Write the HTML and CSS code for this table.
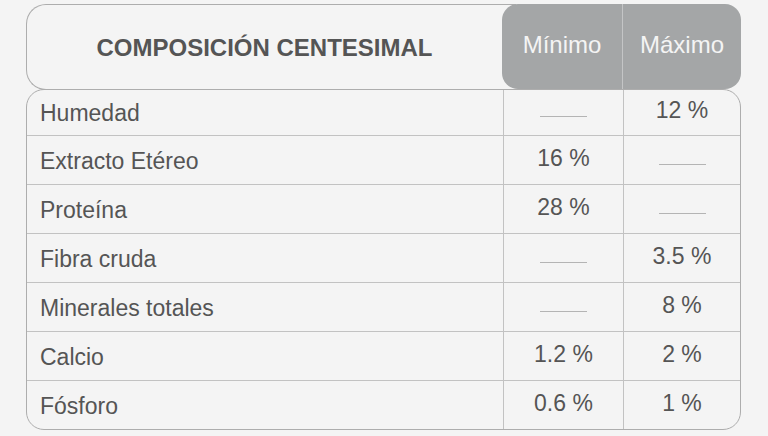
FILE: index.html
```html
<!DOCTYPE html>
<html lang="es">
<head>
<meta charset="utf-8">
<link rel="stylesheet" href="styles.css">
</head>
<body>
<div class="table">
  <div class="head">
    <div class="head-title">COMPOSICIÓN CENTESIMAL</div>
    <div class="head-cols">
      <div class="hc hc-min">Mínimo</div>
      <div class="hc hc-max">Máximo</div>
    </div>
  </div>
  <div class="body">
    <div class="row first"><div class="lab">Humedad</div><div class="val"><span class="dash"></span></div><div class="val">12 %</div></div>
    <div class="row"><div class="lab">Extracto Etéreo</div><div class="val">16 %</div><div class="val"><span class="dash"></span></div></div>
    <div class="row"><div class="lab">Proteína</div><div class="val">28 %</div><div class="val"><span class="dash"></span></div></div>
    <div class="row"><div class="lab">Fibra cruda</div><div class="val"><span class="dash"></span></div><div class="val">3.5 %</div></div>
    <div class="row"><div class="lab">Minerales totales</div><div class="val"><span class="dash"></span></div><div class="val">8 %</div></div>
    <div class="row"><div class="lab">Calcio</div><div class="val">1.2 %</div><div class="val">2 %</div></div>
    <div class="row last"><div class="lab">Fósforo</div><div class="val">0.6 %</div><div class="val">1 %</div></div>
  </div>
</div>
</body>
</html>
```
FILE: styles.css
```css
html, body {
  margin: 0;
  background: #f4f4f4;
}
body {
  padding: 4px 0 0 26px;
  font-family: "Liberation Sans", Arial, sans-serif;
  color: #555;
}
.table {
  width: 715px;
}
.head {
  display: flex;
  height: 86px;
}
.head-title {
  box-sizing: border-box;
  width: 490px;
  height: 86px;
  border: 1px solid #adadad;
  border-right: none;
  border-radius: 20px 0 0 20px;
  display: flex;
  align-items: center;
  justify-content: center;
  padding-right: 14px;
  padding-top: 2px;
  font-weight: bold;
  font-size: 24px;
  color: #555;
}
.head-cols {
  margin-left: -14px;
  width: 239px;
  height: 85px;
  background: #a4a6a7;
  border-radius: 16px;
  display: flex;
}
.hc {
  display: flex;
  align-items: center;
  justify-content: center;
  color: #f4f4f4;
  font-size: 24px;
  padding-bottom: 4px;
}
.hc-min {
  width: 120px;
  border-right: 1px solid #c4c5c6;
}
.hc-max {
  flex: 1;
}
.body {
  margin-top: -1px;
  border: 1px solid #adadad;
  border-radius: 18px;
  overflow: hidden;
}
.row {
  display: grid;
  grid-template-columns: 476px 120px 1fr;
  height: 49px;
  box-sizing: border-box;
  border-bottom: 1px solid #c2c2c2;
}
.row.first {
  height: 46px;
}
.row.last {
  height: 48px;
  border-bottom: none;
}
.lab {
  display: flex;
  align-items: center;
  padding-left: 13px;
  font-size: 23px;
  padding-top: 2px;
}
.val {
  box-sizing: border-box;
  border-left: 1px solid #c2c2c2;
  display: flex;
  align-items: center;
  justify-content: center;
  font-size: 23px;
  padding-bottom: 4px;
}
.dash {
  display: block;
  width: 47px;
  height: 1px;
  background: #b4b4b4;
  margin-top: 12px;
}
```
